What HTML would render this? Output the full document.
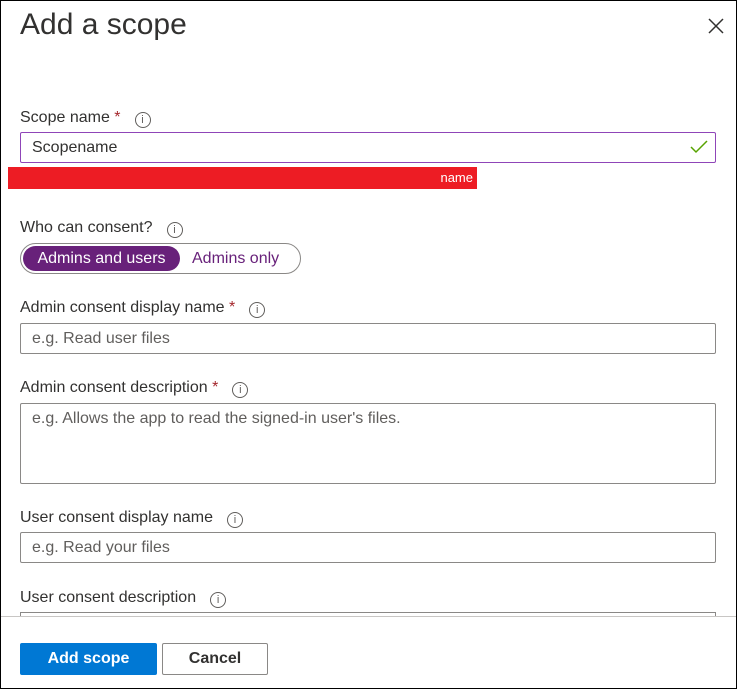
<!DOCTYPE html>
<html><head><style>
*{box-sizing:border-box;margin:0;padding:0}
body{width:737px;height:689px;overflow:hidden;background:#fff;font-family:"Liberation Sans",sans-serif;color:#323130;position:relative}
.frame{position:absolute;left:0;top:0;width:737px;height:689px;border:1px solid #000}
.a{position:absolute}
.lbl{font-size:16px;color:#323130}
.star{color:#a4262c}
.info{display:inline-block;width:16px;height:16px;border:1px solid #605e5c;border-radius:50%;font-size:11px;line-height:14px;text-align:center;color:#605e5c;vertical-align:-1px;margin-left:14px}
.inp{border:1px solid #8a8886;border-radius:2px;font-size:16px;color:#605e5c;padding:6px 11px;width:696px;left:20px}
</style></head><body>
<div class="a" style="left:20px;top:8px;font-size:30px;color:#323130">Add a scope</div>
<svg class="a" style="left:708px;top:18px" width="16" height="16"><path d="M1 1L15 15M15 1L1 15" stroke="#323130" stroke-width="1.5"/></svg>

<div class="a lbl" style="left:20px;top:109px">Scope name <span class="star">*</span><span class="info">i</span></div>
<div class="a inp" style="top:132px;height:31px;border-color:#8f45b8;color:#323130">Scopename</div>
<svg class="a" style="left:690px;top:140px" width="18" height="14"><path d="M1 7L6 12L17 1" stroke="#57a300" stroke-width="1.5" fill="none"/></svg>
<div class="a" style="left:8px;top:167px;width:469px;height:22px;background:#ed1c24;color:#fff;font-size:13px;line-height:22px;text-align:right;padding-right:4px">name</div>

<div class="a lbl" style="left:20px;top:219px">Who can consent?<span class="info">i</span></div>
<div class="a" style="left:20px;top:243px;width:281px;height:31px;border:1px solid #8a8886;border-radius:16px"></div>
<div class="a" style="left:23px;top:246px;width:157px;height:25px;background:#68217a;border-radius:13px;color:#fff;font-size:16px;line-height:25px;text-align:center">Admins and users</div>
<div class="a" style="left:192px;top:246px;font-size:16px;line-height:25px;color:#68217a">Admins only</div>

<div class="a lbl" style="left:20px;top:299px">Admin consent display name <span class="star">*</span><span class="info">i</span></div>
<div class="a inp" style="top:323px;height:31px">e.g. Read user files</div>

<div class="a lbl" style="left:20px;top:379px">Admin consent description <span class="star">*</span><span class="info">i</span></div>
<div class="a inp" style="top:403px;height:81px">e.g. Allows the app to read the signed-in user's files.</div>

<div class="a lbl" style="left:20px;top:509px">User consent display name<span class="info">i</span></div>
<div class="a inp" style="top:532px;height:31px">e.g. Read your files</div>

<div class="a lbl" style="left:20px;top:589px">User consent description<span class="info">i</span></div>
<div class="a" style="left:20px;top:612px;width:696px;height:10px;border:1px solid #8a8886;border-bottom:none"></div>
<div class="a" style="left:0;top:616px;width:737px;height:73px;background:#fff;border-top:1px solid #c8c6c4"></div>

<div class="a" style="left:20px;top:643px;width:137px;height:32px;background:#0078d4;border-radius:2px;color:#fff;font-size:16px;font-weight:bold;line-height:32px;text-align:center">Add scope</div>
<div class="a" style="left:162px;top:643px;width:106px;height:32px;border:1px solid #8a8886;border-radius:2px;font-size:16px;font-weight:bold;line-height:30px;text-align:center;color:#323130">Cancel</div>
<div class="frame"></div>
</body></html>
